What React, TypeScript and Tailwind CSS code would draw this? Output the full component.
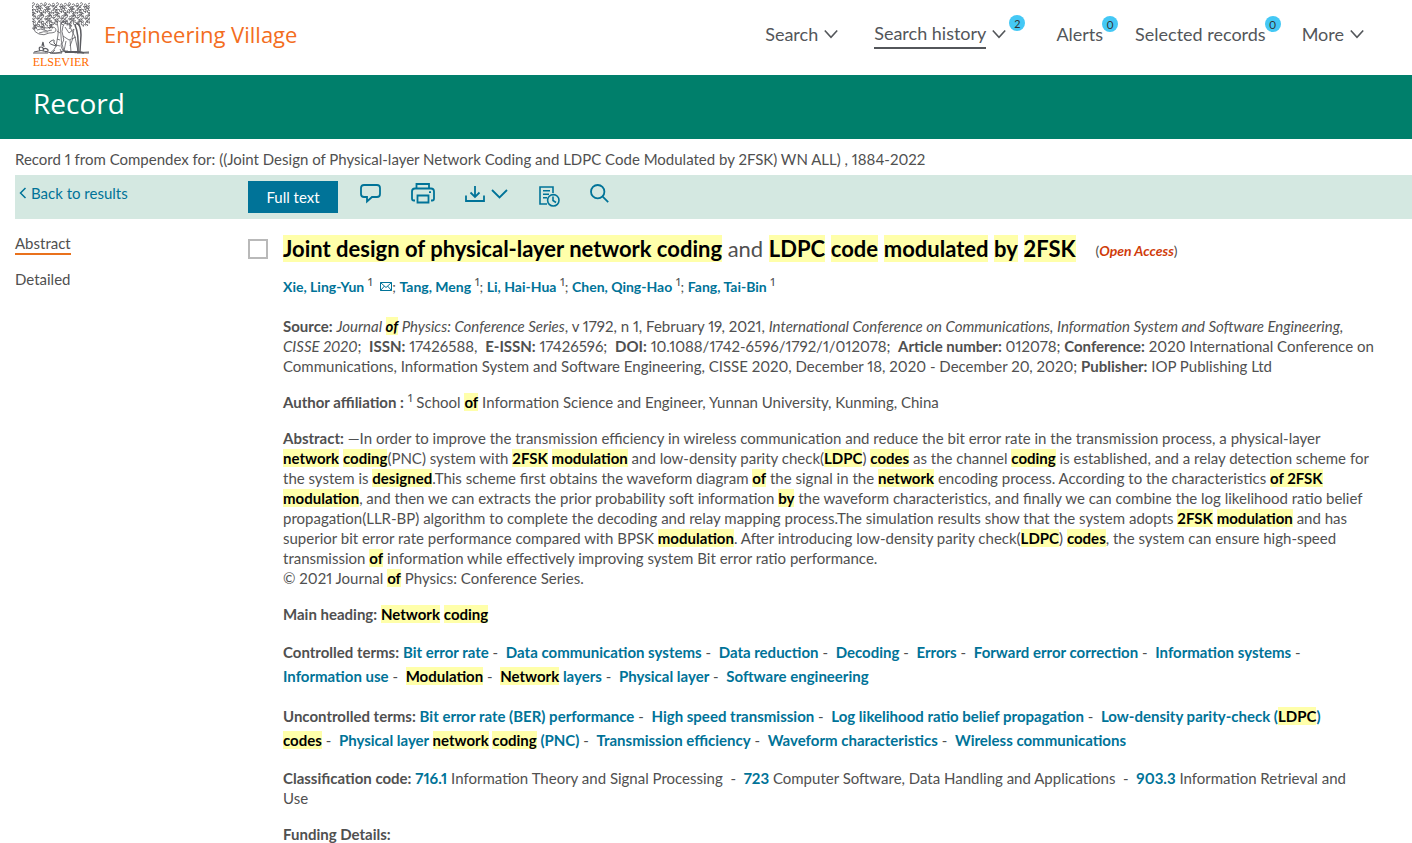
import type { ReactNode } from "react";

type Kids = { children: ReactNode };

const Hit = ({ children }: Kids) => <mark className="bg-[#ffffaa] font-bold text-black">{children}</mark>;
const B = ({ children }: Kids) => <strong className="font-bold">{children}</strong>;
const Term = ({ children }: Kids) => (
  <a href="#term" className="font-bold text-[#007398]">{children}</a>
);
const Sup = () => <sup className="relative -top-1.5 align-baseline text-xs leading-none">1</sup>;
const Dash = () => <span className="whitespace-pre-wrap">{" -  "}</span>;

function Chevron() {
  return (
    <svg width="14" height="10" viewBox="0 0 14 10" fill="none" stroke="currentColor" strokeWidth="1.6" aria-hidden="true">
      <path d="M0.8 1.5 7 8.2 13.2 1.5" />
    </svg>
  );
}

function Tree() {
  const leaves: string[] = [];
  for (let row = 0; row < 8; row++) {
    for (let col = 0; col < 15; col++) {
      const x = 1 + col * 4 + ((row * 7 + col * 3) % 3) - 1;
      const y = 1.5 + row * 3.1 + ((col * 5 + row * 2) % 3) * 0.6;
      if (row > 5 && col > 5 && (col < 8 || row > 6)) continue;
      const s = (row * 3 + col * col) % 4 < 2 ? 1 : -1;
      leaves.push(`M${x} ${y}q${s * 2} -2 ${s * 2.6} .3q-.4 2 ${-s * 2} 1.7q${-s * 1.6} .3 ${s * 0.6} 1.2`);
      if ((row + col) % 2) leaves.push(`M${x - 1} ${y + 2}q1.5 -1.6 3 0`);
    }
  }
  return (
    <svg width="58" height="54" viewBox="0 0 58 54" fill="none" stroke="#5a5b60" strokeWidth="0.8" aria-hidden="true">
      <path d={leaves.join("")} />
      <path d="M2 27q3-4 8-2t9 0q5 0 5 3t-7 3q-5 3-10 1t-5-5M5 28q4-2 7 0t8 0M7 31q5-2 9-1" />
      <path d="M25 20q2 7 1 13t-2 11q-1 4-6 7M29 18q-1 8 0 16t0 10q1 5 5 7M25 29l3 2M25 37l3 1M24 43l4 1M25 23l-7-4M29 21l7-3M23 48l-3 3M28 47l2 4" />
      <path d="M24 43q-3-2-2-4t-3 0 2 4l4 1M2 50q7-3 14 0t15-1q12 3 26 1M1 51h15M18 51h12M45 51h12" strokeWidth="1" />
      <path d="M8 49q-2-4 1-4t2 4q1-4 4-2t-2 3M10 44l1-4 1 5" strokeWidth="1.2" />
      <path d="M31 24q-2 6 0 10t-1 8l2 7h4M32 22q4-3 6 3l5 10 3 14M38 21q2 4-1 6M33 25l4 6 5-4-2 9M31 34l6 4 7-3M34 39l-2 10M38 38l1 12M41 36l-3 8" />
      <path d="M44 21q5 1 5 12l-1 16M43 23q4 9 3 26" strokeWidth="1.5" />
      <path d="M33 50h15l4 1" strokeWidth="1.8" />
    </svg>
  );
}

function Badge({ n, className }: { n: number; className: string }) {
  return (
    <span className={`absolute flex size-4 items-center justify-center rounded-full bg-[#44c8f5] text-[11px] leading-none text-[#323232] ${className}`}>{n}</span>
  );
}

const item = "relative flex h-8 items-center gap-1.5 text-[#53565a]";

function Header() {
  return (
    <header className="flex h-[75px] items-start justify-between pr-12 pl-8">
      <a href="#home" className="flex items-start gap-3.5">
        <span className="flex w-[58px] flex-col items-center pt-0.5">
          <Tree />
          <span className="font-['Liberation_Serif',serif] text-xs leading-3 text-[#ff6c00]">ELSEVIER</span>
        </span>
        <span className="pt-4.5 font-['Open_Sans',sans-serif] text-[22px] leading-8 text-[#f36d21]">Engineering Village</span>
      </a>
      <nav className="flex pt-[18px] text-[18px]" aria-label="Main">
        <button className={`${item} mr-9`}>Search<Chevron /></button>
        <button className={`${item} mr-12.5`}>
          <span className="border-b-2 border-[#53565a] pt-1 pb-1">Search history</span><Chevron />
          <Badge n={2} className="-top-[3px] -right-[19px]" />
        </button>
        <a href="#alerts" className={`${item} mr-8`}>Alerts<Badge n={0} className="-top-0.5 -right-[15px]" /></a>
        <a href="#selected" className={`${item} mr-9`}>Selected records<Badge n={0} className="-top-0.5 -right-[15px]" /></a>
        <button className={item}>More<Chevron /></button>
      </nav>
    </header>
  );
}

function Toolbar() {
  return (
    <div className="ml-[15px] flex h-11 bg-[#d4e8e1] text-[#007398]">
      <a href="#results" className="flex h-9 w-[233px] items-center gap-1 pl-1 leading-5">
        <svg width="8" height="12" viewBox="0 0 8 12" fill="none" stroke="currentColor" strokeWidth="1.5" aria-hidden="true"><path d="M6.5 1 1.5 6l5 5" /></svg>
        Back to results
      </a>
      <button className="mt-1.5 h-8 w-[90px] bg-[#007398] text-white">Full text</button>
      <button className="ml-5.5 h-[38px]" aria-label="Comment">
        <svg width="21" height="20" viewBox="0 0 21 20" fill="none" stroke="currentColor" strokeWidth="1.8"><path d="M4 1h13q3 0 3 3v6q0 3-3 3h-5l-5 4.5V13H4q-3 0-3-3V4q0-3 3-3Z" /></svg>
      </button>
      <button className="ml-[30px] h-9" aria-label="Print">
        <svg width="24" height="21" viewBox="0 0 24 21" fill="none" stroke="currentColor" strokeWidth="1.8"><path d="M5.5 5.5V1H18v4.5M4 17.500H2.800Q1 17.500 1 15.500V8.500Q1 5.500 4 5.500h16q3 0 3 3v7q0 2-1.800 2H20M6.500 12.500h11V19.500h-11Z" /><path d="M18 9.200h2" /></svg>
      </button>
      <button className="ml-[30px] flex h-[38px] items-center gap-1.5" aria-label="Download">
        <svg width="20" height="16" viewBox="0 0 20 16" fill="none" stroke="currentColor" strokeWidth="1.8"><path d="M1 9.500V15h18V9.500M10 0v10.500M5.500 6.500 10 11l4.500-4.500" /></svg>
        <svg width="17" height="10" viewBox="0 0 17 10" fill="none" stroke="currentColor" strokeWidth="1.8"><path d="M1 1l7.500 7.500L16 1" /></svg>
      </button>
      <button className="ml-[31px] h-[42px]" aria-label="Create alert">
        <svg width="21" height="21" viewBox="0 0 21 21" fill="none" stroke="currentColor" strokeWidth="1.6"><path d="M8 18H1V1h13v6M4 4.800h7M4 8.300h6M4 11.700h4" /><circle cx="14.300" cy="14.300" r="5.700" /><path d="M14 10.500v4l3 2" /></svg>
      </button>
      <button className="ml-[30px] h-9" aria-label="Search within">
        <svg width="19" height="19" viewBox="0 0 19 19" fill="none" stroke="currentColor" strokeWidth="1.800"><circle cx="7.700" cy="7.700" r="6.700" /><path d="m12.700 12.700 5.500 5.500" /></svg>
      </button>
    </div>
  );
}

export default function App() {
  return (
    <div className="bg-white font-[Lato,sans-serif] text-[15px] leading-5 text-[#505050] proportional-nums">
      <Header />
      <div className="h-16 bg-[#007f6b] px-[33px] pt-2.5">
        <h1 className="font-['Open_Sans',sans-serif] text-[28px] leading-9 text-white">Record</h1>
      </div>
      <p className="px-[15px] pt-2.5 pb-1.5">Record 1 from Compendex for: ((Joint Design of Physical-layer Network Coding and LDPC Code Modulated by 2FSK) WN ALL) , 1884-2022</p>
      <Toolbar />
      <div className="flex">
        <nav className="flex w-[248px] shrink-0 flex-col items-start gap-3.5 pt-[15px] pl-[15px]" aria-label="Views">
          <a href="#abstract" className="border-b-2 border-[#e9711c] leading-[19px]">Abstract</a>
          <a href="#detailed" className="leading-5">Detailed</a>
        </nav>
        <input type="checkbox" id="record" aria-label="Select record" className="mt-5 size-5 shrink-0 appearance-none border-2 border-[#b9b9b9]" />
        <main className="min-w-0 flex-1 pl-[15px]">
          <h2 className="mt-4 flex items-center gap-5 text-[22px] leading-7">
            <label htmlFor="record">
              <Hit>Joint design of physical-layer network coding</Hit> and <Hit>LDPC</Hit> <Hit>code</Hit> <Hit>modulated</Hit> <Hit>by</Hit> <Hit>2FSK</Hit>
            </label>
            <span className="pt-1 text-sm">(<em className="font-bold text-[#d03c0b]">Open Access</em>)</span>
          </h2>
          <p className="mt-3 h-6 text-sm leading-6">
            <Term>Xie, Ling-Yun</Term> <Sup />{" "}
            <svg className="ml-1 inline-block align-[1px] text-[#007398]" width="12" height="9" viewBox="0 0 12 9" fill="none" stroke="currentColor" aria-hidden="true"><path d="M.5.5h11v8H.5ZM.5.5 6 5.500l5.500-5M.5 8.500l4-4.500M11.500 8.500l-4-4.500" /></svg>
            ; <Term>Tang, Meng</Term> <Sup />; <Term>Li, Hai-Hua</Term> <Sup />; <Term>Chen, Qing-Hao</Term> <Sup />; <Term>Fang, Tai-Bin</Term> <Sup />
          </p>
          <div className="mt-[17px] flex flex-col gap-4">
            <p>
              <B>Source:</B> <em>Journal <Hit>of</Hit> Physics: Conference Series</em>, v 1792, n 1, February 19, 2021, <em>International Conference on Communications, Information System and Software Engineering,<br />
              CISSE 2020</em>;&nbsp; <B>ISSN:</B> 17426588,&nbsp; <B>E-ISSN:</B> 17426596;&nbsp; <B>DOI:</B> 10.1088/1742-6596/1792/1/012078;&nbsp; <B>Article number:</B> 012078; <B>Conference:</B> 2020 International Conference on<br />
              Communications, Information System and Software Engineering, CISSE 2020, December 18, 2020 - December 20, 2020; <B>Publisher:</B> IOP Publishing Ltd
            </p>
            <p><B>Author affiliation :</B> <Sup /> School <Hit>of</Hit> Information Science and Engineer, Yunnan University, Kunming, China</p>
            <p>
              <B>Abstract:</B> —In order to improve the transmission efficiency in wireless communication and reduce the bit error rate in the transmission process, a physical-layer<br />
              <Hit>network</Hit> <Hit>coding</Hit>(PNC) system with <Hit>2FSK</Hit> <Hit>modulation</Hit> and low-density parity check(<Hit>LDPC</Hit>) <Hit>codes</Hit> as the channel <Hit>coding</Hit> is established, and a relay detection scheme for<br />
              the system is <Hit>designed</Hit>.This scheme first obtains the waveform diagram <Hit>of</Hit> the signal in the <Hit>network</Hit> encoding process. According to the characteristics <Hit>of 2FSK</Hit><br />
              <Hit>modulation</Hit>, and then we can extracts the prior probability soft information <Hit>by</Hit> the waveform characteristics, and finally we can combine the log likelihood ratio belief<br />
              propagation(LLR-BP) algorithm to complete the decoding and relay mapping process.The simulation results show that the system adopts <Hit>2FSK</Hit> <Hit>modulation</Hit> and has<br />
              superior bit error rate performance compared with BPSK <Hit>modulation</Hit>. After introducing low-density parity check(<Hit>LDPC</Hit>) <Hit>codes</Hit>, the system can ensure high-speed<br />
              transmission <Hit>of</Hit> information while effectively improving system Bit error ratio performance.<br />
              © 2021 Journal <Hit>of</Hit> Physics: Conference Series.
            </p>
            <p><B>Main heading:</B> <Hit>Network</Hit> <Hit>coding</Hit></p>
            <p className="leading-6">
              <B>Controlled terms:</B> <Term>Bit error rate</Term><Dash /><Term>Data communication systems</Term><Dash /><Term>Data reduction</Term><Dash /><Term>Decoding</Term><Dash /><Term>Errors</Term><Dash /><Term>Forward error correction</Term><Dash /><Term>Information systems</Term><Dash /><br />
              <Term>Information use</Term><Dash /><Term><Hit>Modulation</Hit></Term><Dash /><Term><Hit>Network</Hit> layers</Term><Dash /><Term>Physical layer</Term><Dash /><Term>Software engineering</Term>
            </p>
            <p className="leading-6">
              <B>Uncontrolled terms:</B> <Term>Bit error rate (BER) performance</Term><Dash /><Term>High speed transmission</Term><Dash /><Term>Log likelihood ratio belief propagation</Term><Dash /><Term>Low-density parity-check (<Hit>LDPC</Hit>)</Term><br />
              <Term><Hit>codes</Hit></Term><Dash /><Term>Physical layer <Hit>network</Hit> <Hit>coding</Hit> (PNC)</Term><Dash /><Term>Transmission efficiency</Term><Dash /><Term>Waveform characteristics</Term><Dash /><Term>Wireless communications</Term>
            </p>
            <p>
              <B>Classification code:</B> <Term>716.1</Term> Information Theory and Signal Processing &nbsp;-&nbsp; <Term>723</Term> Computer Software, Data Handling and Applications &nbsp;-&nbsp; <Term>903.3</Term> Information Retrieval and<br />
              Use
            </p>
            <p><B>Funding Details:</B></p>
          </div>
        </main>
      </div>
    </div>
  );
}
